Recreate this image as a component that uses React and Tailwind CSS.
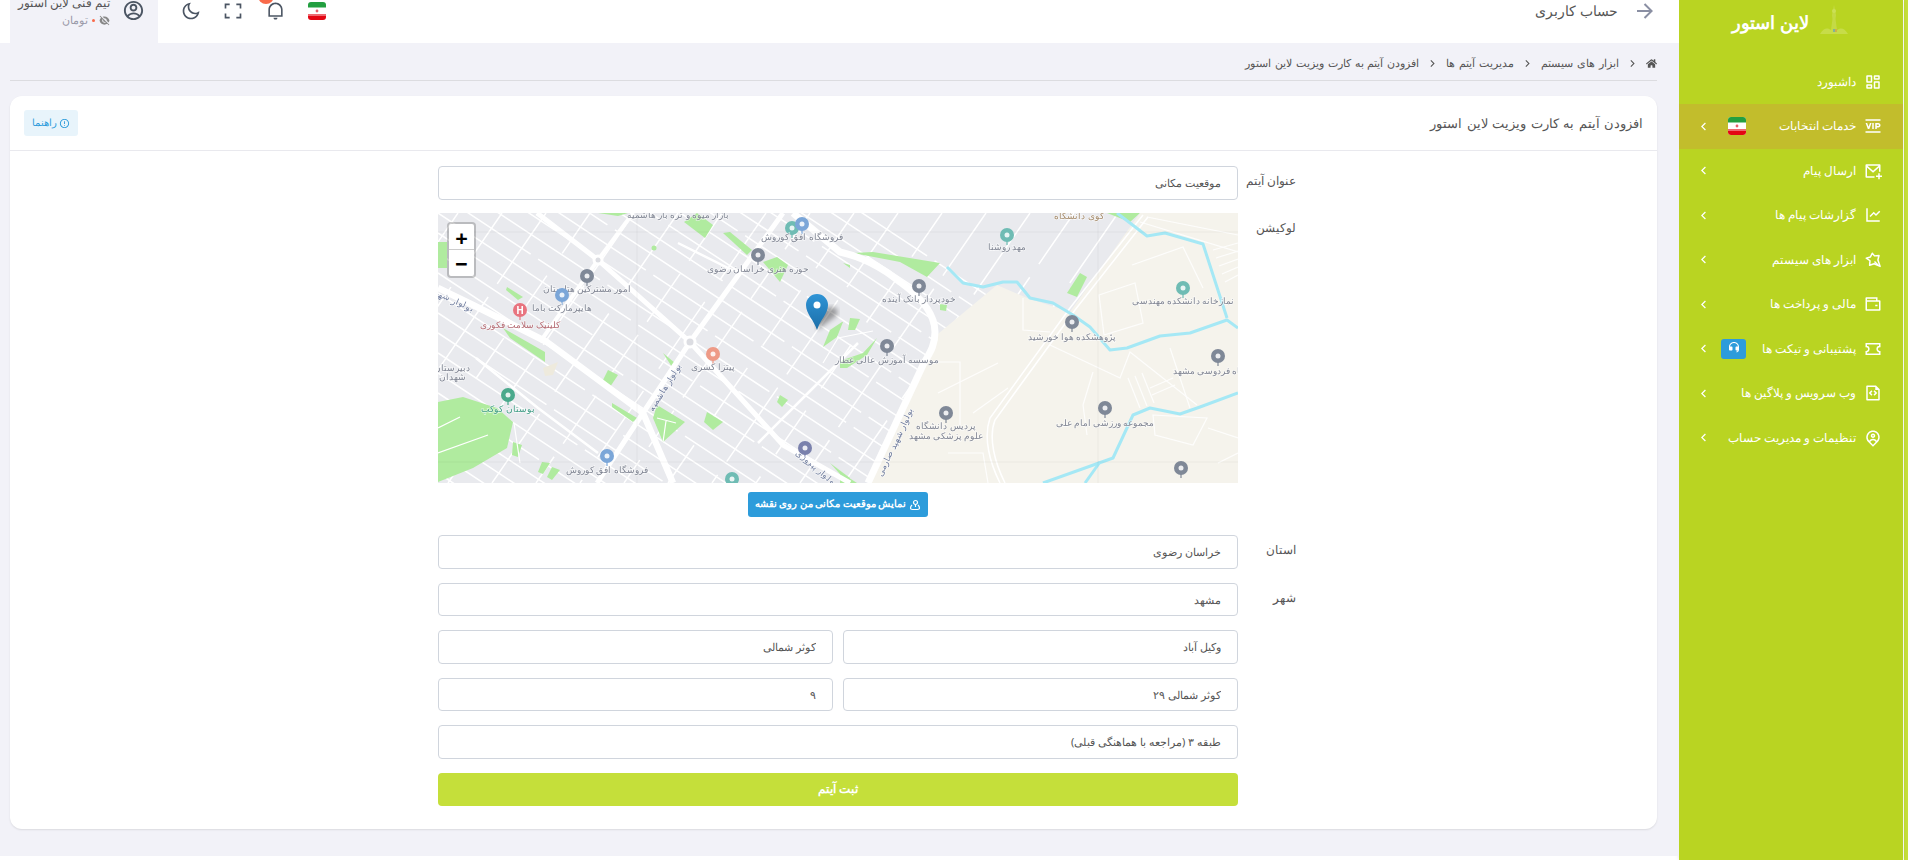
import {
  RiDashboardLine, RiVipLine, RiMailAddLine, RiLineChartLine, RiWalletLine,
  RiFileCodeLine, RiMapPinUserLine, RiArrowLeftSLine, RiArrowRightSLine, RiArrowRightLine, RiCustomerServiceFill,
  RiNotificationLine, RiFullscreenLine, RiMoonLine, RiAccountCircleLine, RiEyeOffFill, RiErrorWarningLine,
} from 'react-icons/ri';
import { FaHome } from 'react-icons/fa';

const FONT = "font-['Noto_Sans','Open_Sans',sans-serif]";

// the two line icons that the icon set does not have in this shape
const ToolsIcon = ({ size }) => (
  <svg viewBox="0 0 24 24" width={size} height={size} fill="none" stroke="currentColor" strokeWidth="2" strokeLinejoin="round" className="shrink-0">
    <path d="M11 3l3 3.5 6-.5-1.5 6 3 8.5-8-3.5-6 2 .5-6L3 9.500l5.500-1.500z" />
    <path d="M14 14l5 5" />
  </svg>
);

const TicketIcon = ({ size }) => (
  <svg viewBox="0 0 24 24" width={size} height={size} fill="none" stroke="currentColor" strokeWidth="2" className="shrink-0">
    <path d="M3 5h18v3.500a3.500 3.500 0 0 0 0 7V19H3v-3.500a3.500 3.500 0 0 0 0-7z" />
  </svg>
);

const LocateIcon = () => (
  <svg viewBox="0 0 24 24" width="12" height="12" fill="none" stroke="currentColor" strokeWidth="2.400" className="shrink-0">
    <circle cx="13" cy="7" r="4" />
    <path d="M13 11v5M6 12c-2 2-3 4-3 6 0 2 2 3 4 3h10c2 0 4-1 4-3 0-2-1-4-3-6" />
  </svg>
);

const menu = [
  { title: 'داشبورد', Icon: RiDashboardLine },
  { title: 'خدمات انتخابات', Icon: RiVipLine, arrow: true, active: true, flag: true },
  { title: 'ارسال پیام', Icon: RiMailAddLine, arrow: true },
  { title: 'گزارشات پیام ها', Icon: RiLineChartLine, arrow: true },
  { title: 'ابزار های سیستم', Icon: ToolsIcon, arrow: true },
  { title: 'مالی و پرداخت ها', Icon: RiWalletLine, arrow: true },
  { title: 'پشتیبانی و تیکت ها', Icon: TicketIcon, arrow: true, badge: true },
  { title: 'وب سرویس و پلاگین ها', Icon: RiFileCodeLine, arrow: true },
  { title: 'تنظیمات و مدیریت حساب', Icon: RiMapPinUserLine, arrow: true },
];

const Flag = () => (
  <svg viewBox="0 0 18 18" className="w-[18px] h-[18px] shrink-0">
    <clipPath id="flag-clip"><rect width="18" height="18" rx="3" /></clipPath>
    <g clipPath="url(#flag-clip)">
      <rect width="18" height="18" fill="#fff" />
      <rect width="18" height="5.500" fill="#239f40" />
      <rect y="12" width="18" height="6" fill="#e30613" />
      <rect y="12.600" width="18" height="0.800" fill="#fff" />
      <circle cx="9" cy="9" r="1.400" fill="#e8606a" />
    </g>
  </svg>
);

// faint tower with hills beside the shop name
const LogoMark = () => (
  <svg viewBox="0 0 28 30" className="w-[28px] h-[30px] shrink-0 opacity-70">
    <path d="M0 29 C4 22 8 23 11 25 L17 25 C20 23 24 22 28 29 Z" fill="#cde05a" />
    <path d="M14 0 L16 10 L15.500 14 L17 25 L11 25 L12.500 14 L12 10 Z" fill="#c9dd55" />
    <circle cx="14" cy="6" r="2" fill="#d3e56c" />
    <rect x="13" y="24" width="2" height="3" fill="#6aa7c9" />
    <rect x="15" y="24" width="2" height="3" fill="#d9a05a" />
  </svg>
);

const Sidebar = () => (
  <aside className="flex shrink-0 h-full">
    <div className="w-[4px] bg-[#c5df3a]" />
    <div className="w-px bg-white" />
    <div className="w-[224px] bg-[#b9d422] text-white shadow-[0_0_4px_rgba(0,0,0,0.12)]">
      <div className="h-[59.5px] flex items-start gap-[11px] pr-[55px] pt-[5px]">
        <LogoMark />
        <span className="text-[18px] leading-[34px] font-bold">لاین استور</span>
      </div>
      {menu.map(({ title, Icon, arrow, active, flag, badge }) => (
        <div key={title} className={`h-[44.5px] flex items-center pr-[21px] pl-[17px] ${active ? 'bg-[#c2bd2c]' : ''}`}>
          <Icon size={18} className="shrink-0" />
          <span className="mr-[8px] flex-1 text-[12px] leading-[18px]">{title}</span>
          {flag && <div className="ml-[17px]"><Flag /></div>}
          {badge && (
            <div className="ml-[10px] w-[25px] h-[20px] rounded-[3px] bg-[#2d9cdb] flex items-start justify-center pt-[2px]">
              <RiCustomerServiceFill size={12} />
            </div>
          )}
          {arrow && <RiArrowLeftSLine size={15} className="shrink-0" />}
        </div>
      ))}
    </div>
  </aside>
);

const Header = () => (
  <header className="h-[43px] shrink-0 bg-white flex justify-between overflow-hidden">
    <div className="flex items-center gap-[15px] h-[21px] pr-[22px]">
      <RiArrowRightLine size={24} className="text-[#8a8fa3]" />
      <span className="text-[14px] leading-[20px] text-[#555]">حساب کاربری</span>
    </div>
    <div className="flex items-start h-full ml-[10px]">
      <div className="w-[42px] h-[21px] flex items-center justify-center"><Flag /></div>
      <div className="relative w-[42px] h-[21px] flex items-center justify-center text-[#4b5563]">
        <RiNotificationLine size={19} />
        <span className="absolute left-[4px] -top-[12px] w-[16px] h-[16px] rounded-full bg-[#f96a4a]" />
      </div>
      <div className="w-[42px] h-[21px] flex items-center justify-center text-[#4b5563]"><RiFullscreenLine size={20} /></div>
      <div className="w-[42px] h-[21px] flex items-center justify-center text-[#4b5563]"><RiMoonLine size={20} /></div>
      <div className="mr-[12px] w-[148px] h-full bg-[#f2f2f8] flex items-start pr-[13px]">
        <RiAccountCircleLine size={23} className="text-[#4b5563] shrink-0 -mt-[1px]" />
        <div className="mr-[12px] -mt-[6px]">
          <div className="text-[11.5px] leading-[18px] text-[#555] whitespace-nowrap">تیم فنی لاین استور</div>
          <div className="flex items-center gap-[4px] mt-[1px] text-[11px] leading-[14px] text-[#9a9aa8]">
            <RiEyeOffFill size={11} className="text-[#888]" />
            <span className="w-[3px] h-[3px] rounded-full bg-[#f96a4a]" />
            <span>تومان</span>
          </div>
        </div>
      </div>
    </div>
  </header>
);

const Crumb = () => <RiArrowRightSLine size={13} className="text-[#555] mx-[7px] shrink-0" />;

const Breadcrumb = () => (
  <nav className="h-[38px] pt-[3px] mr-[22px] ml-[10px] border-b border-[#dcdce0] flex items-center text-[11.2px] leading-[16px] [word-spacing:1px] text-[#555]">
    <FaHome size={11} className="shrink-0" />
    <Crumb />
    <span>ابزار های سیستم</span>
    <Crumb />
    <span>مدیریت آیتم ها</span>
    <Crumb />
    <span>افزودن آیتم به کارت ویزیت لاین استور</span>
  </nav>
);

const Field = ({ value, className = '' }) => (
  <input
    readOnly
    value={value}
    className={`h-[33.5px] px-[16px] border border-[#d0d5dd] rounded-[4px] bg-white text-[11px] text-[#555] outline-none ${FONT} ${className}`}
  />
);

const Row = ({ label, children, className = '' }) => (
  <div className={`flex items-start pr-[361px] ${className}`}>
    <label className="w-[58px] shrink-0 pt-[6px] text-[12px] leading-[18px] text-[#555]">{label}</label>
    {children}
  </div>
);

/* ---- map data, in the map's own 800x270 space ---- */
const GREEN = '#b0eb9f';
const greens = [
  '0,29 9,29 9,55 0,55', '69,74 85,84 80,87 68,77', '65,115 107,139 107,149 72,125', '170,157 180,162 172,174 164,169',
  '174,190 199,205 195,209 174,194', '0,189 25,184 59,195 75,209 69,235 35,255 0,269', '75,229 84,232 80,244 74,242',
  '104,249 112,250 105,261 100,259', '114,254 122,257 114,267 109,264', '219,192 247,209 225,229 215,205',
  '225,140 237,150 234,154', '269,199 285,209 275,217 266,209', '342,182 350,187 344,194 339,189', '246,9 259,0 275,12 267,25',
  '285,20 292,19 314,37 309,42', '325,49 339,44 350,52 342,69', '405,50 412,52 412,55', '385,134 392,117 404,109 405,109 399,124',
  '410,117 412,105 422,106 417,117', '402,148 425,140 439,125 429,142 409,155 402,155', '415,40 435,39 502,50 489,64 462,49',
  '502,91 509,92 508,98 502,97', '642,60 649,64 639,84 629,80', '669,0 702,0 692,9', '402,259 419,270 402,270',
  '392,250 412,265 410,270', '160,0 190,0 180,3',
];
const roads = [
  { d: 'M0 75 L35 92 L109 129 L205 200 L235 270', w: 6.5 },
  { d: 'M99 0 L160 47 L252 129 L345 232 L412 270', w: 5 },
  { d: 'M345 0 L252 129 L205 200 L159 270', w: 5 },
  { d: 'M355 0 L402 39 C425 44 445 55 462 69 C480 82 497 100 497 119 C497 135 490 142 485 152 L430 270', w: 7 },
  { d: 'M195 0 L160 47 L102 129', w: 4 },
  { d: 'M38 145 L100 195 L160 240', w: 2.5 },
  { d: 'M300 60 L240 30 M420 130 L370 180 L320 230', w: 2.5 },
  { d: 'M0 240 L50 222 M0 215 L22 204 M76 210 L82 250', w: 1.2 },
  { d: 'M385 150 L400 125 L435 118 M219 205 L238 210 M225 229 L228 208', w: 1.2 },
];
const beigeLines = [
  'M694 52L745 34L765 75', 'M661 82L697 70L705 110L666 122Z', 'M585 85L585 117L612 119', 'M612 132L682 165L692 139L759 192',
  'M645 192L655 159M645 192L649 222', 'M690 165L702 195M697 163L709 193M704 160L716 190', 'M712 175L735 165M714 182L737 172',
  'M775 37L800 30M778 45L800 38M781 53L800 46M784 61L800 54M787 69L800 62', 'M485 149L522 149L522 212',
  'M715 202L769 205L755 232L717 222Z', 'M702 9L800 39M709 4L800 22', 'M732 135L752 195', 'M500 180L560 150M535 200L570 175',
  'M510 240L545 240L550 270', 'M770 215L800 225M780 250L800 240',
];
const pois = [
  { x: 354, y: 15, c: '#6fbcb4' }, { x: 364, y: 11, c: '#7ba6d8', t: 'فروشگاه افق کوروش', ty: 24 },
  { x: 320, y: 42, c: '#7f8897', t: 'حوزه هنری خراسان رضوی', ty: 56 },
  { x: 149, y: 63, c: '#7f8897', t: 'امور مشترکین هتلستان', ty: 76 },
  { x: 124, y: 82, c: '#7ba6d8', t: 'هایپرمارکت باما', ty: 95 },
  { x: 82, y: 97, c: '#e8747f', t: 'کلینیک سلامت فکوری', ty: 112, tc: '#b56a72', g: 'H' },
  { x: 275, y: 141, c: '#ee9a86', t: 'پیتزا کسری', ty: 154 },
  { x: 70, y: 182, c: '#4aa98c', t: 'بوستان کوکب', ty: 196, tc: '#3f9c85' },
  { x: 169, y: 243, c: '#7ba6d8', t: 'فروشگاه افق کوروش', ty: 257 },
  { x: 367, y: 235, c: '#7a81ac' }, { x: 294, y: 266, c: '#6fbcb4' },
  { x: 569, y: 22, c: '#6fbcb4', t: 'مهد روشنا', ty: 34 },
  { x: 481, y: 73, c: '#7f8897', t: 'خودپرداز بانک آینده', ty: 86 },
  { x: 449, y: 133, c: '#7f8897', t: 'موسسه آموزش عالی عطار', ty: 147 },
  { x: 634, y: 109, c: '#7f8897', t: 'پژوهشکده هوا خورشید', ty: 124 },
  { x: 745, y: 75, c: '#6fbcb4', t: 'نمازخانه دانشکده مهندسی', ty: 88 },
  { x: 780, y: 143, c: '#7f8897', t: 'دانشگاه فردوسی مشهد', ty: 158 },
  { x: 667, y: 195, c: '#7f8897', t: 'مجموعه ورزشی امام علی', ty: 210 },
  { x: 508, y: 200, c: '#7f8897', t: 'پردیس دانشگاه', ty: 213 },
  { x: 743, y: 255, c: '#7f8897' },
];
const notes = [
  { x: 508, y: 223, t: 'علوم پزشکی مشهد' },
  { x: 14, y: 155, t: 'دبیرستان' },
  { x: 14, y: 164, t: 'شهدان' },
  { x: 240, y: 2, t: 'بازار میوه و تره بار هاشمیه' },
  { x: 227, y: 174, t: 'بولوار هاشمیه', r: -58, c: '#6d7a9c' },
  { x: 15, y: 87, t: 'بولوار شهید', r: 24, c: '#6d7a9c' },
  { x: 379, y: 255, t: 'بولوار پیروزی', r: 40, c: '#6d7a9c' },
  { x: 457, y: 229, t: 'بولوار شهید صارمی', r: -65, c: '#6d7a9c' },
  { x: 641, y: 3, t: 'کوی دانشگاه', c: '#a58a6a' },
];

// side streets: long ones along the main avenue, short ones across them
const along = [];
for (let c = -280, i = 0; c < 290; c += 20, i++) along.push({ c, dash: `${110 + (i * 37) % 120} 9` });
const across = [];
for (let c = 20, i = 0; c < 900; c += 44, i++) across.push({ c, dash: `${40 + (i * 23) % 60} ${16 + (i * 11) % 22}` });

const MapCanvas = () => (
  <svg viewBox="0 0 800 270" className="absolute inset-0 w-full h-full blur-[0.5px]">
    <defs>
      <linearGradient id="pin-fill" x1="0" y1="0" x2="0" y2="1">
        <stop offset="0" stopColor="#2f94d6" />
        <stop offset="1" stopColor="#1c6ea8" />
      </linearGradient>
      <filter id="pin-shadow"><feGaussianBlur stdDeviation="2.500" /></filter>
    </defs>
    <rect width="800" height="270" fill="#e9eaee" />
    <g stroke="#fff" strokeWidth="1.500" fill="none">
      {along.map((l) => <path key={l.c} d={`M0 ${l.c}L720 ${l.c + 720 * 0.66}`} strokeDasharray={l.dash} />)}
      {across.map((l) => <path key={l.c} d={`M${l.c} 0L${l.c - 186} 270`} strokeDasharray={l.dash} />)}
    </g>
    {greens.map((p) => <polygon key={p} points={p} fill={GREEN} />)}
    <polygon points="105,155 120,149 115,162 107,163" fill="#eeeadd" />
    <circle cx="216" cy="35" r="2.500" fill={GREEN} />
    <polygon points="702,0 800,0 800,270 430,270 495,125 559,72 589,85 632,99" fill="#f5f3ec" />
    <g stroke="#fff" strokeWidth="1.200" fill="none" opacity="0.85">
      {beigeLines.map((d) => <path key={d} d={d} />)}
    </g>
    <path d="M705 2L632 95L552 205C545 225 552 250 562 270M710 4L637 97L557 207C550 225 557 250 567 270" stroke="#fff" strokeWidth="1.500" fill="none" />
    <g stroke="#a5e8f5" strokeWidth="3" fill="none" strokeLinejoin="round">
      <path d="M509 54L525 70L545 74L565 69L579 69L592 85L615 90L635 102L652 114L672 137L689 135L722 123L752 120L789 107L800 115" />
      <path d="M679 0L709 23L727 20L765 31L789 105" />
      <path d="M800 180L762 194L742 201L712 195L695 202L675 245L605 270" />
      <path d="M662 249L647 270" />
    </g>
    <g stroke="#fff" fill="none" strokeLinejoin="round">
      {roads.map((r) => <path key={r.d} d={r.d} strokeWidth={r.w} />)}
    </g>
    <circle cx="252" cy="129" r="6.500" fill="#fff" />
    <circle cx="252" cy="129" r="3.500" fill="#dcdde2" />
    <circle cx="160" cy="47" r="5.500" fill="#fff" />
    <circle cx="160" cy="47" r="2.500" fill="#dcdde2" />
    <path d="M199 0V270M660 0V270M0 19H800M0 249H800" stroke="#000" strokeOpacity="0.04" />
    {pois.map((p) => (
      <g key={`${p.x}-${p.y}`}>
        <path d={`M${p.x} ${p.y + 4}V${p.y + 10}`} stroke={p.c} strokeWidth="1.200" />
        <circle cx={p.x} cy={p.y} r="7" fill={p.c} />
        {p.g ? (
          <text x={p.x} y={p.y + 3.500} textAnchor="middle" fontSize="10" fontWeight="700" fill="#fff">{p.g}</text>
        ) : (
          <circle cx={p.x} cy={p.y} r="2.500" fill="#fff" opacity="0.85" />
        )}
        {p.t && (
          <text x={p.x} y={p.ty + 3} textAnchor="middle" fontSize="8.500" fill={p.tc || '#7f8492'} stroke="#fff" strokeOpacity="0.6" strokeWidth="1.500" paintOrder="stroke">
            {p.t}
          </text>
        )}
      </g>
    ))}
    {notes.map((n) => (
      <text
        key={n.t}
        x={n.x}
        y={n.y + 3}
        textAnchor="middle"
        fontSize="8.500"
        fill={n.c || '#7f8492'}
        stroke="#fff"
        strokeOpacity="0.6"
        strokeWidth="1.500"
        paintOrder="stroke"
        transform={n.r ? `rotate(${n.r} ${n.x} ${n.y})` : undefined}
      >
        {n.t}
      </text>
    ))}
    <path d="M379 117L398 103C403 97 396 92 389 95L379 100Z" fill="#000" opacity="0.35" filter="url(#pin-shadow)" />
    <path d="M379 117C376 107 368 101 368 92A11 11 0 0 1 390 92C390 101 382 107 379 117Z" fill="url(#pin-fill)" />
    <circle cx="379" cy="92" r="3.500" fill="#fff" />
  </svg>
);

const MapView = () => (
  <div className="relative w-[800px] h-[270px] overflow-hidden" dir="ltr">
    <MapCanvas />
    <div className="absolute left-[9px] top-[9px] w-[29px] rounded-[4px] border-2 border-black/20 bg-clip-padding bg-white flex flex-col text-black">
      <span className="h-[26px] flex items-center justify-center text-[22px] font-bold leading-none border-b border-[#ccc]">+</span>
      <span className="h-[26px] flex items-center justify-center text-[22px] font-bold leading-none">−</span>
    </div>
  </div>
);

export default function App() {
  return (
    <div dir="rtl" className={`flex w-[1908px] h-[860px] overflow-hidden bg-white ${FONT}`}>
      <Sidebar />
      <main className="flex-1 h-[856px] flex flex-col bg-[#f2f2f8]">
        <Header />
        <Breadcrumb />
        <section className="mr-[22px] ml-[10px] mt-[15px] h-[733px] rounded-xl bg-white shadow-[0_1px_2px_rgba(0,0,0,0.1)]">
          <div className="h-[55px] px-[14px] border-b border-[#e9e9ee] flex items-center justify-between">
            <h1 className="text-[13.4px] leading-[20px] [word-spacing:1px] font-normal text-[#555]">افزودن آیتم به کارت ویزیت لاین استور</h1>
            <button className="w-[54px] h-[26px] rounded-[3px] bg-[#e8f4fb] text-[#2d9cdb] text-[9.5px] flex items-center justify-center gap-[2px]">
              <RiErrorWarningLine size={11} />
              راهنما
            </button>
          </div>
          <form className="pt-[15px]">
            <Row label="عنوان آیتم"><Field value="موقعیت مکانی" className="w-[800px]" /></Row>
            <Row label="لوکیشن" className="mt-[13.5px]"><MapView /></Row>
            <Row className="mt-[9px]">
              <div className="w-[800px] flex justify-center">
                <button type="button" className="w-[180px] h-[25px] rounded-[3px] bg-[#2d9cdb] text-white text-[9.8px] font-bold flex items-center justify-center gap-[3px]">
                  <LocateIcon />
                  نمایش موقعیت مکانی من روی نقشه
                </button>
              </div>
            </Row>
            <Row label="استان" className="mt-[18px]"><Field value="خراسان رضوی" className="w-[800px]" /></Row>
            <Row label="شهر" className="mt-[14px]"><Field value="مشهد" className="w-[800px]" /></Row>
            <Row className="mt-[14px]">
              <div className="w-[800px] flex justify-between">
                <Field value="وکیل آباد" className="w-[395px]" />
                <Field value="کوثر شمالی" className="w-[395px]" />
              </div>
            </Row>
            <Row className="mt-[14px]">
              <div className="w-[800px] flex justify-between">
                <Field value="کوثر شمالی ۲۹" className="w-[395px]" />
                <Field value="۹" className="w-[395px]" />
              </div>
            </Row>
            <Row className="mt-[14px]"><Field value="طبقه ۳ (مراجعه با هماهنگی قبلی)" className="w-[800px]" /></Row>
            <Row className="mt-[14px]">
              <button type="button" className="w-[800px] h-[33.5px] rounded-[4px] bg-[#c5df3a] text-white text-[12px] font-bold">ثبت آیتم</button>
            </Row>
          </form>
        </section>
      </main>
    </div>
  );
}
